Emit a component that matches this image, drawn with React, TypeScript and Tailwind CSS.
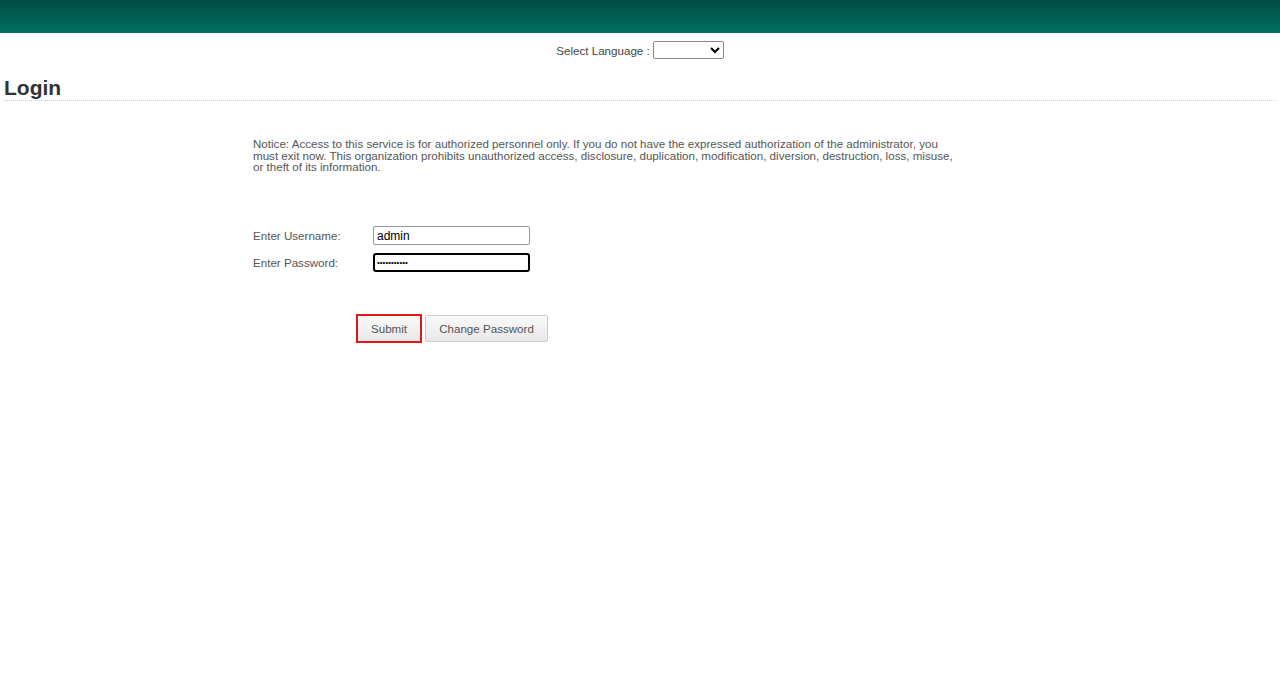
const App = () => {
  return (
    <div className="min-h-[695px] bg-white font-['Liberation_Sans',Arial,sans-serif] text-[#555]">
      <div className="h-[33px] bg-gradient-to-b from-[#004a42] to-[#007265]" />

      <div className="flex justify-center items-center h-[34px] text-[11.6px] text-[#444]">
        <span className="mr-[3px] translate-y-[1px]">Select Language :</span>
        <select className="w-[71px] h-[18px] border border-[#888] rounded-[2px] bg-white text-[12px] text-black">
          <option></option>
        </select>
      </div>

      <div className="mx-[4px] border-b border-dotted border-[#ccc] pt-[9px]">
        <h1 className="text-[21px] leading-[24px] font-bold text-[#333]">Login</h1>
      </div>

      <div className="ml-[253px] w-[702px] pt-[37px]">
        <p className="text-[11.6px] leading-[11.7px] text-[#555]">
          Notice: Access to this service is for authorized personnel only. If you do not have the expressed
          authorization of the administrator, you must exit now. This organization prohibits unauthorized access,
          disclosure, duplication, modification, diversion, destruction, loss, misuse, or theft of its information.
        </p>

        <div className="mt-[53px] flex flex-col gap-[8px] text-[11.6px]">
          <div className="flex items-center">
            <label className="w-[120px]">Enter Username:</label>
            <input
              defaultValue="admin"
              className="w-[157px] h-[19px] border border-[#999] rounded-[2px] px-[3px] text-[12px] text-black outline-none"
            />
          </div>
          <div className="flex items-center">
            <label className="w-[120px]">Enter Password:</label>
            <input
              type="password"
              defaultValue="adminadmin1"
              className="w-[157px] h-[19px] border-2 border-black rounded-[3px] px-[2px] text-[8px] text-black outline-none"
            />
          </div>
        </div>

        <div className="mt-[42px] ml-[103px] flex items-center gap-[3px] text-[11.6px]">
          <button className="w-[66px] h-[29px] border-2 border-[#e01818] bg-gradient-to-b from-[#fafafa] to-[#e8e8e8] text-[#555]">
            Submit
          </button>
          <button className="w-[123px] h-[27px] border border-[#ccc] rounded-[2px] bg-gradient-to-b from-[#fafafa] to-[#e8e8e8] text-[#555]">
            Change Password
          </button>
        </div>
      </div>
    </div>
  );
};

export default App;
